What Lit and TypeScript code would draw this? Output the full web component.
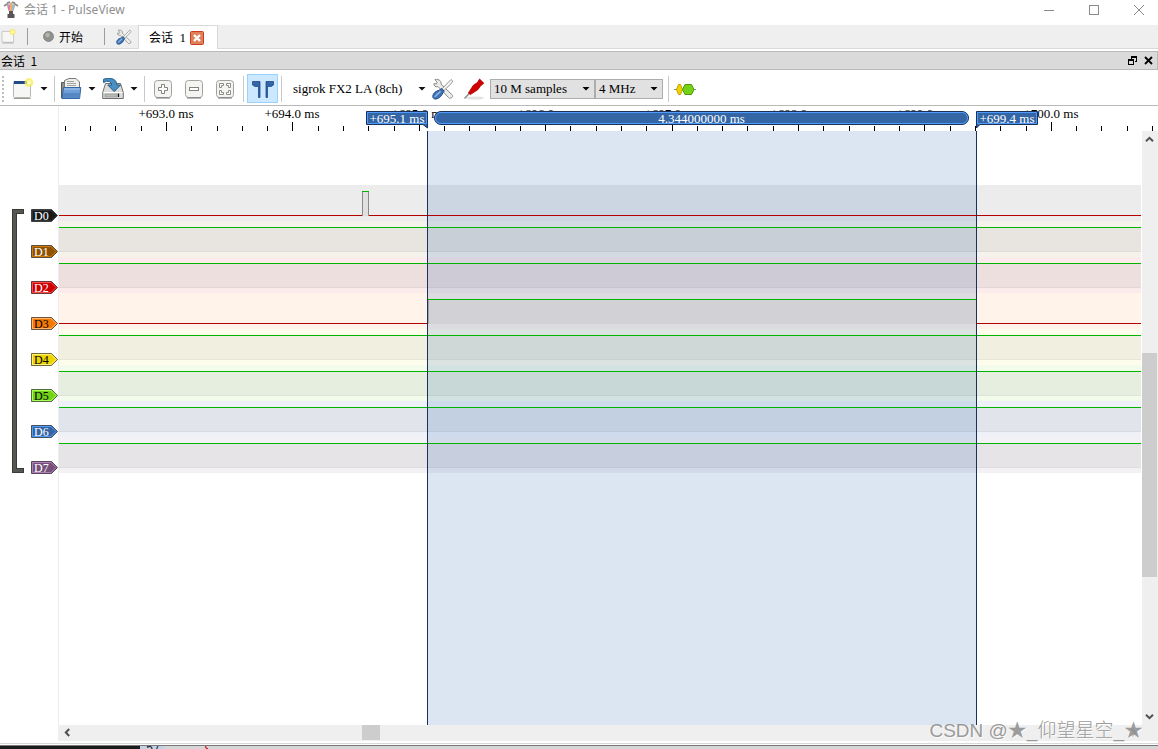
import { LitElement, html, svg, css } from "lit";
import { customElement } from "lit/decorators.js";

type Channel = { name: string; color: string; light: string; ink: string; band: string; high: "all" | "pulse" | "range" };

const CHANNELS: Channel[] = [
  { name: "D0", color: "#16191a", light: "#2c3436", ink: "#fff", band: "#ececec", high: "pulse" },
  { name: "D1", color: "#8f5202", light: "#d17a08", ink: "#fff", band: "#f5f1eb", high: "all" },
  { name: "D2", color: "#cc0000", light: "#ff4a4a", ink: "#fff", band: "#fbebeb", high: "all" },
  { name: "D3", color: "#f57900", light: "#ffb469", ink: "#000", band: "#fff3ea", high: "range" },
  { name: "D4", color: "#edd400", light: "#fff27a", ink: "#000", band: "#fefceb", high: "all" },
  { name: "D5", color: "#73d216", light: "#a9ff54", ink: "#000", band: "#f3fbeb", high: "all" },
  { name: "D6", color: "#3465a4", light: "#4f9bff", ink: "#fff", band: "#eef2f8", high: "all" },
  { name: "D7", color: "#75507b", light: "#b57cbf", ink: "#fff", band: "#f3f1f4", high: "all" },
];

// Time axis: pixels per millisecond, and the position of the first labelled tick.
const PX_PER_MS = 126.4;
const FIRST_MS = 693;
const FIRST_X = 107;
const timeX = (ms: number) => Math.round(FIRST_X + (ms - FIRST_MS) * PX_PER_MS);

const CURSOR_A = timeX(695.064);
const CURSOR_B = timeX(699.408);

const TRACE_TOP = 54;
const TRACE_PITCH = 36;
const HIGH = 6;
const LOW = 30;

const toolsIcon = (size: number) => html`<svg width=${size} height=${size} viewBox="0 0 22 22" aria-hidden="true">
  <path d="M3 1.5 L5.2 4.5 L4.5 6 L2 5.5 C1.5 7.5 3.5 9.5 6 8.6 L16.5 19.5 C17.6 21 20.6 20 20.6 18 C20.6 17 19.8 16.4 19 15.8 L9 6.2 C9.6 3.5 7.5 .8 3 1.5Z" fill="#eceeec" stroke="#888a85"/>
  <path d="M19 1.5 L20.8 3.2 L18.8 6 L12 12.5 L10.2 10.8 L16.5 4Z" fill="#f6f6f6" stroke="#888a85" stroke-width=".9"/>
  <path d="M9.2 10.4 L12.2 13.2 L10.7 15 C10 18 6 21.4 3 21 C.4 20.6 .4 17.6 1.6 15.8 C3.2 13.4 5.6 12.6 7.4 12.2Z" fill="#3e73b5" stroke="#204a87"/>
  <path d="M3 18.5 L8 13.8" stroke="#8fb4e0" stroke-width="1.6" stroke-linecap="round"/>
</svg>`;

const newIcon = (size: number, bar: boolean) => html`<svg width=${size} height=${size} viewBox="0 0 22 22" aria-hidden="true">
  <rect x="1.5" y="3.5" width="17" height="16" rx="1" fill="#f6f6f5" stroke="#b4b6b2"/>
  ${bar ? svg`<rect x="2" y="3" width="13" height="3" fill="#204a87"/>` : null}
  <path d="M2 20.5H18.5" stroke="#999b97"/>
  <circle cx="17" cy="4.5" r="4.4" fill="#f7ee57" opacity=".8"/>
  <circle cx="17" cy="4.5" r="2" fill="#fffcc4"/>
</svg>`;

const openIcon = html`<svg width="22" height="22" viewBox="0 0 22 22" aria-hidden="true">
  <path d="M1.5 20V4.5H6V20Z" fill="#8d8f8b" stroke="#555753"/>
  <path d="M4.5 12V2.5L9 .5H16L19.5 4V12Z" fill="#eeeeec" stroke="#777975"/>
  <path d="M7 3.5H14M7 5.5H16M7 7.5H16" stroke="#a2a4a0"/>
  <path d="M3.5 9.5H20.8L19.6 20.5H2Z" fill="#6f9fd8" stroke="#3465a4"/>
  <path d="M4.2 11H19.6" stroke="#a9c8ee"/>
  <path d="M3.5 15H20L19.3 19.8H2.8Z" fill="#5587c5"/>
</svg>`;

const saveIcon = html`<svg width="22" height="22" viewBox="0 0 22 22" aria-hidden="true">
  <path d="M3.5 5.5H18.5L21.3 14.5V20.5H.7V14.5Z" fill="#dcdddb" stroke="#6d6f6b"/>
  <path d="M1.5 14.5H20.5" stroke="#fff"/>
  <rect x="3" y="16" width="12" height="3" fill="#b9bbb7" stroke="#888a85" stroke-width=".6"/>
  <path d="M16.5 15.5V19" stroke="#111" stroke-width="1.3"/>
  <path d="M1.6 1.2C6-.4 14.5-.6 15 7H18.6L12.2 13.6L5.8 7H9.6C9.4 4 6 1.6 1.6 4.6Z" fill="#4a8ec2" stroke="#1f5d8c"/>
</svg>`;

const frameIcon = (kind: "in" | "out" | "fit") => html`<svg width="22" height="22" viewBox="0 0 22 22" aria-hidden="true">
  <rect x="2.5" y="2.5" width="17" height="17" rx="3" fill="#f4f4f3" stroke="#a0a29e"/>
  <path d="M4 20H18" stroke="#777975"/>
  ${kind === "in" ? svg`<path d="M9.5 6.5H12.5V9.5H15.5V12.5H12.5V15.5H9.5V12.5H6.5V9.5H9.5Z" fill="#fff" stroke="#80827e"/>` : null}
  ${kind === "out" ? svg`<rect x="6.5" y="9.5" width="9" height="3" fill="#fff" stroke="#80827e"/>` : null}
  ${kind === "fit"
    ? svg`<path d="M5.5 5.5H9.5V7.5H7.5V9.5H5.5ZM12.5 5.5H16.5V9.5H14.5V7.5H12.5ZM5.5 12.5H7.5V14.5H9.5V16.5H5.5ZM14.5 12.5H16.5V16.5H12.5V14.5H14.5Z" fill="#fff" stroke="#80827e" stroke-width=".9"/>`
    : null}
</svg>`;

const cursorsIcon = html`<svg width="22" height="22" viewBox="0 0 22 22" aria-hidden="true">
  <path d="M.5 3.5H8V19.5H6.5V8.5H3L.5 7Z" fill="#3465a4" stroke="#204a87" stroke-width=".8"/>
  <path d="M21.5 3.5H14V19.5H15.5V8.5H19L21.5 7Z" fill="#3465a4" stroke="#204a87" stroke-width=".8"/>
</svg>`;

const probeIcon = html`<svg width="22" height="22" viewBox="0 0 22 22" aria-hidden="true">
  <ellipse cx="12" cy="20" rx="9" ry="1.6" fill="#e2e2e2"/>
  <path d="M1.5 20.5L8.5 13" stroke="#888a85" stroke-width="1.4"/>
  <path d="M5.4 15L10.4 7.2L14.4 4.6L16.6 1L20.8 5.2L17.4 8L15 11.6L7.4 16.6Z" fill="#d40000" stroke="#9a0000" stroke-width=".8"/>
</svg>`;

const decoderIcon = html`<svg width="22" height="22" viewBox="0 0 22 22" aria-hidden="true">
  <path d="M0 11.5H22" stroke="#888a85"/>
  <path d="M2.5 11.5L4.5 6.5H6.5L8.5 11.5L6.5 16.5H4.5Z" fill="#edd400" stroke="#c4a000"/>
  <path d="M8.5 11.5L11 6.5H17.5L20 11.5L17.5 16.5H11Z" fill="#73d216" stroke="#4e9a06"/>
</svg>`;

const chevron = (rotate: number) => html`<svg width="9" height="9" viewBox="0 0 9 9" aria-hidden="true">
  <path d="M1 6.2L4.5 2.8L8 6.2" fill="none" stroke="#505050" stroke-width="2" transform="rotate(${rotate} 4.5 4.5)"/>
</svg>`;

@customElement("pv-menu-arrow")
class MenuArrow extends LitElement {
  static styles = css`
    :host { display: block; }
    .arrow { display: flex; align-items: center; justify-content: center; width: 10px; height: 22px; padding: 0; border: 0; background: none; }
    .tri { width: 8px; height: 4px; background: #111; clip-path: polygon(0 0, 100% 0, 50% 100%); }
  `;
  render() {
    return html`<button class="arrow" aria-label="Menu"><span class="tri"></span></button>`;
  }
}

@customElement("app-root")
export class AppRoot extends LitElement {
  static styles = css`
    :host {
      display: flex;
      flex-direction: column;
      position: relative;
      height: 100vh;
      overflow: hidden;
      box-sizing: border-box;
      background: #fff;
      color: #000;
      font: 13px/16px "Liberation Serif", "Noto Sans CJK SC", serif;
    }
    * { box-sizing: border-box; }
    button { padding: 0; border: 0; background: none; color: inherit; font: inherit; }
    svg { display: block; flex: none; }
    .cjk { font: 12px/16px "Noto Sans CJK SC", sans-serif; }

    .titlebar { display: flex; align-items: center; flex: none; height: 25px; padding: 0 9px 6px 3px; color: #8f8f8f; }
    .title { flex: 1; margin: 0 0 0 5px; font: 12px/18px "Noto Sans", "Noto Sans CJK SC", sans-serif; }
    .window-buttons { display: flex; gap: 24px; }
    .window-button { display: grid; place-items: center; width: 21px; height: 18px; }

    .session-bar { display: flex; align-items: center; flex: none; height: 24px; padding-left: 1px; background: #efefef; border-bottom: 1px solid #d9d9d9; }
    .bar-line { flex: none; width: 1px; height: 17px; background: #9c9c9c; }
    .run { display: flex; align-items: center; gap: 5px; margin: 0 21px 0 15px; }
    .settings { margin: 0 6px 0 11px; }
    .tab { display: flex; align-items: center; align-self: stretch; gap: 4px; width: 80px; height: 24px; padding-left: 10px; background: #fff; border: 1px solid #d9d9d9; border-bottom: 0; }
    .session-icon { margin-right: 11px; }

    .dock-title { display: flex; align-items: center; justify-content: space-between; flex: none; height: 19px; margin-top: 2px; padding: 0 4px 0 1px; background: #dadada; border: 1px solid #b9b9b9; border-left: 0; }
    .dock-name { margin: 0; font-weight: normal; }
    .dock-buttons { display: flex; gap: 7px; }

    .toolbar { display: flex; align-items: center; flex: none; gap: 5px; height: 36px; padding: 2px 0 0 2px; border-bottom: 1px solid #b9b9b9; }
    .handle { width: 2px; height: 26px; margin-right: 3px; background: repeating-linear-gradient(#bdbdbd 0 2px, transparent 2px 4px); }
    .tool { display: block; }
    .tool-line { flex: none; width: 1px; height: 26px; background: #c9c9c9; }
    .zoom-tools { display: flex; gap: 9px; margin: 0 2px; }
    .toggled { display: grid; place-items: center; width: 31px; height: 29px; margin: 0 -2px; background: #cce8ff; border: 1px solid #99d1ff; }
    .device { min-width: 119px; margin-left: 6px; text-align: left; white-space: nowrap; }
    .probe { margin-left: 4px; }
    .combos { display: flex; }
    .combo { position: relative; }
    .combo::after { content: ""; position: absolute; right: 5px; top: 8px; width: 8px; height: 4px; background: #000; clip-path: polygon(0 0, 100% 0, 50% 100%); pointer-events: none; }
    .select { display: block; height: 20px; padding: 0 0 0 3px; appearance: none; border: 1px solid #adadad; border-radius: 0; background: #e1e1e1; color: #000; font: inherit; }
    .samples { width: 105px; }
    .rate { width: 68px; }

    .view { display: grid; grid-template: 25px minmax(0, 1fr) 16px / 58px minmax(0, 1fr) 16px; flex: 1; min-height: 0; }
    .gutter { grid-area: 2 / 1; width: 100%; height: 100%; }
    .ruler { grid-area: 1 / 2 / 2 / 4; width: 100%; height: 25px; border-left: 1px solid #ededed; }
    .traces { grid-area: 2 / 2; width: 100%; height: 100%; border-left: 1px solid #ededed; border-right: 1px solid #fff; }
    .ruler, .traces, .gutter { overflow: hidden; }
    .mid { text-anchor: middle; }
    .tag-text { font-size: 12px; }
    .white { fill: #fff; }
    .vscroll { display: flex; flex-direction: column; grid-area: 2 / 3; padding-right: 1px; background: #efefef; }
    .hscroll { display: flex; grid-area: 3 / 2; padding-bottom: 1px; background: #efefef; }
    .corner { grid-area: 3 / 3; background: #efefef; }
    .scroll-button { display: grid; place-items: center; flex: none; width: 15px; height: 17px; }
    .hscroll .scroll-button { width: 18px; height: 15px; }
    .track { display: flex; flex: 1; min-height: 0; }
    .vscroll .track { flex-direction: column; }
    .thumb { background: #cdcdcd; }

    .frame-edge { flex: none; height: 4px; border-bottom: 1px solid #fff; background: linear-gradient(#fff 2px, #d8d8d8 2px); }
    .behind { display: flex; flex: none; height: 4px; overflow: hidden; border-top: 1px solid #777; background: #d6d6d6; font: 12px/6px "Liberation Mono", monospace; }
    .behind-dark { width: 140px; background: #1c1c1c; }
    .behind-line { width: 24px; padding-left: 6px; background: #c4d3e3; color: #223; }
    .behind-mark { margin-left: 38px; color: #d00000; }

    .watermark { position: absolute; right: 15px; bottom: 4px; color: rgba(130, 130, 130, 0.8); font: 300 19px/28px "Liberation Sans", "Noto Sans CJK SC", sans-serif; text-shadow: 1px 1px 0 rgba(255, 255, 255, 0.7); white-space: nowrap; pointer-events: none; }
  `;

  private renderTitlebar() {
    return html`<header class="titlebar">
      <svg width="16" height="18" viewBox="0 0 16 18" aria-hidden="true">
        <path d="M1 5L4 3L6 5M15 5L12 3L10 5M4 2L7 1M12 2L9 1" stroke="#8a8a8a" stroke-width="1.6" fill="none"/>
        <path d="M4 4L7 2H10L12 4L10 10H6Z" fill="#d8c6c0" stroke="#999" stroke-width=".6"/>
        <path d="M6 4V9" stroke="#e85fa8" stroke-width="1.4"/><path d="M8 3V10" stroke="#f0a83c" stroke-width="1.4"/><path d="M10 4V9" stroke="#7ab8d8" stroke-width="1.4"/>
        <path d="M6 10H10V13H11.5V17H4.5V13H6Z" fill="#5b5557"/>
      </svg>
      <h1 class="title">会话 1 - PulseView</h1>
      <div class="window-buttons">
        <button class="window-button" aria-label="Minimize"><svg width="10" height="10" viewBox="0 0 10 10"><path d="M0 5.5H10" stroke="#8a8a8a"/></svg></button>
        <button class="window-button" aria-label="Maximize"><svg width="10" height="10" viewBox="0 0 10 10"><rect x=".5" y=".5" width="9" height="9" fill="none" stroke="#8a8a8a"/></svg></button>
        <button class="window-button" aria-label="Close"><svg width="10" height="10" viewBox="0 0 10 10"><path d="M0 0L10 10M10 0L0 10" stroke="#8a8a8a"/></svg></button>
      </div>
    </header>`;
  }

  private renderSessionBar() {
    return html`<nav class="session-bar">
      <button class="session-icon" aria-label="New session">${newIcon(15, false)}</button>
      <span class="bar-line"></span>
      <button class="run cjk">
        <svg width="11" height="11" viewBox="0 0 11 11" aria-hidden="true"><circle cx="5.5" cy="5.5" r="5" fill="#8f918d" stroke="#7a7c78" stroke-width=".8"/><circle cx="4.5" cy="4" r="2.2" fill="#b4b6b2"/></svg>
        开始
      </button>
      <span class="bar-line"></span>
      <button class="settings" aria-label="Settings">${toolsIcon(16)}</button>
      <div class="tab"><span><span class="cjk">会话</span>&nbsp; 1</span>
        <button aria-label="Close session"><svg width="14" height="14" viewBox="0 0 14 14"><rect x=".5" y=".5" width="13" height="13" rx="1" fill="#e08058" stroke="#cf3a22"/><path d="M4 4L10 10M10 4L4 10" stroke="#fff" stroke-width="2.4"/></svg></button>
      </div>
    </nav>`;
  }

  private renderToolbar() {
    return html`<div class="toolbar" role="toolbar">
      <span class="handle"></span>
      <button class="tool" aria-label="New view">${newIcon(22, true)}</button>
      <pv-menu-arrow></pv-menu-arrow>
      <span class="tool-line"></span>
      <button class="tool" aria-label="Open">${openIcon}</button>
      <pv-menu-arrow></pv-menu-arrow>
      <button class="tool" aria-label="Save">${saveIcon}</button>
      <pv-menu-arrow></pv-menu-arrow>
      <span class="tool-line"></span>
      <div class="zoom-tools">
        <button class="tool" aria-label="Zoom in">${frameIcon("in")}</button>
        <button class="tool" aria-label="Zoom out">${frameIcon("out")}</button>
        <button class="tool" aria-label="Zoom to fit">${frameIcon("fit")}</button>
      </div>
      <span class="tool-line"></span>
      <button class="toggled" aria-label="Show cursors" aria-pressed="true">${cursorsIcon}</button>
      <span class="tool-line"></span>
      <button class="device">sigrok FX2 LA (8ch)</button>
      <pv-menu-arrow></pv-menu-arrow>
      <button class="tool" aria-label="Configure device">${toolsIcon(22)}</button>
      <button class="tool probe" aria-label="Channels">${probeIcon}</button>
      <div class="combos">
        <div class="combo"><select class="select samples" aria-label="Sample count"><option>10 M samples</option></select></div>
        <div class="combo"><select class="select rate" aria-label="Sample rate"><option>4 MHz</option></select></div>
      </div>
      <span class="tool-line"></span>
      <button class="tool" aria-label="Add decoder">${decoderIcon}</button>
    </div>`;
  }

  private renderRuler() {
    const majors = Array.from({ length: 8 }, (_, i) => FIRST_MS + i);
    const ticks = Array.from({ length: 44 }, (_, i) => i - 4);
    const a = CURSOR_A;
    const b = CURSOR_B;
    return html`<svg class="ruler" role="img" aria-label="Time ruler">
      ${ticks.map((i) => {
        const x = timeX(FIRST_MS + i / 5);
        return svg`<rect x=${x} y=${i % 5 === 0 ? 16 : 20} width="1" height="9" fill="#000"/>`;
      })}
      ${majors.map((ms) => svg`<text class="mid" x=${timeX(ms)} y="12">+${ms}.0 ms</text>`)}
      <path d="M${a - 60.5} 5.5H${a + 0.5}V22L${a - 4} 18.5H${a - 60.5}Z" fill="#3465a4" stroke="#19325a"/>
      <path d="M${a - 59.5} 17.5V6.5H${a - 0.5}V17.5Z" fill="none" stroke="#4f9bff"/>
      <text class="mid white" x=${a - 30} y="17">+695.1 ms</text>
      <rect x=${a + 7.5} y="5.5" width=${b - a - 15} height="13" rx="6.5" fill="#3465a4" stroke="#19325a"/>
      <rect x=${a + 8.5} y="6.5" width=${b - a - 17} height="11" rx="5.5" fill="none" stroke="#4f9bff"/>
      <text class="mid white" x=${(a + b) / 2} y="17">4.344000000 ms</text>
      <path d="M${b + 0.5} 22V5.5H${b + 61.5}V18.5H${b + 4}Z" fill="#3465a4" stroke="#19325a"/>
      <path d="M${b + 1.5} 17.5V6.5H${b + 60.5}V17.5Z" fill="none" stroke="#4f9bff"/>
      <text class="mid white" x=${b + 31} y="17">+699.4 ms</text>
    </svg>`;
  }

  private renderTrace(c: Channel, i: number) {
    const top = TRACE_TOP + i * TRACE_PITCH;
    const high = top + HIGH;
    const low = top + LOW;
    const depth = LOW - HIGH;
    const band = svg`<rect x="0" y=${top} width="100%" height=${TRACE_PITCH} fill=${c.band}/>`;
    if (c.high === "all") {
      return svg`${band}
        <rect x="0" y=${high} width="100%" height=${depth + 1} fill="#000" opacity=".05"/>
        <rect x="0" y=${low} width="100%" height="1" fill="#000" opacity=".04"/>
        <rect x="0" y=${high} width="100%" height="1" fill="#00b400"/>`;
    }
    const from = c.high === "pulse" ? timeX(694.55) : CURSOR_A + 1;
    const to = c.high === "pulse" ? from + 7 : CURSOR_B + 1;
    const edge = c.high === "pulse" ? "#8a8a8a" : "#b4b0ae";
    return svg`${band}
      <rect x="0" y=${low} width=${from} height="1" fill="#b40000"/>
      <rect x=${to} y=${low} width="100%" height="1" fill="#b40000"/>
      <rect x=${from} y=${high} width=${to - from} height=${depth + 1} fill="#000" opacity=".05"/>
      <rect x=${from} y=${high} width="1" height=${depth + 1} fill=${edge}/>
      <rect x=${to - 1} y=${high} width="1" height=${depth + 1} fill=${edge}/>
      <rect x=${from} y=${high} width=${to - from} height="1" fill="#00b400"/>`;
  }

  private renderTag(c: Channel, i: number) {
    const y = TRACE_TOP + LOW + i * TRACE_PITCH;
    return svg`<g transform="translate(0 ${y})">
      <path d="M31.5 -5.5H51.5L57.5 .5L51.5 6.5H31.5Z" fill=${c.color} stroke="#000" stroke-opacity=".55"/>
      <path d="M32.5 -4.5H51L56 .5L51 5.5H32.5Z" fill=${c.color} stroke=${c.light}/>
      <text class="tag-text" x="34" y="5" fill=${c.ink}>${c.name}</text>
    </g>`;
  }

  private renderView() {
    const end = TRACE_TOP + LOW + 7 * TRACE_PITCH;
    return html`<main class="view">
      <svg class="gutter" role="img" aria-label="Channels">
        <path d="M24 80.5H14.5V${end + 3.5}H24" fill="none" stroke="#3a3a38" stroke-width="5"/>
        <path d="M23 80.5H14.5V${end + 3.5}H23" fill="none" stroke="#555753" stroke-width="3"/>
        ${CHANNELS.map((c, i) => this.renderTag(c, i))}
      </svg>
      ${this.renderRuler()}
      <svg class="traces" role="img" aria-label="Waveforms">
        ${CHANNELS.map((c, i) => this.renderTrace(c, i))}
        <rect x=${CURSOR_A} y="0" width=${CURSOR_B - CURSOR_A} height="100%" fill="#316bb2" opacity=".17"/>
        ${CHANNELS.map((c, i) => {
          const y = TRACE_TOP + i * TRACE_PITCH + (c.high === "pulse" ? LOW : HIGH);
          return svg`<rect x=${CURSOR_A} y=${y} width=${CURSOR_B - CURSOR_A} height="1" fill=${c.high === "pulse" ? "#b40000" : "#00b400"}/>`;
        })}
        <rect x=${CURSOR_A} y="0" width="1" height="100%" fill="#19325a"/>
        <rect x=${CURSOR_B} y="0" width="1" height="100%" fill="#19325a"/>
      </svg>
      <div class="vscroll">
        <button class="scroll-button" aria-label="Scroll up">${chevron(0)}</button>
        <div class="track"><span style="flex:205"></span><span class="thumb" style="flex:224"></span><span style="flex:131"></span></div>
        <button class="scroll-button" aria-label="Scroll down">${chevron(180)}</button>
      </div>
      <div class="hscroll">
        <button class="scroll-button" aria-label="Scroll left">${chevron(270)}</button>
        <div class="track"><span style="flex:286"></span><span class="thumb" style="flex:18"></span><span style="flex:744"></span></div>
        <button class="scroll-button" aria-label="Scroll right">${chevron(90)}</button>
      </div>
      <div class="corner"></div>
    </main>`;
  }

  render() {
    return html`
      ${this.renderTitlebar()}
      ${this.renderSessionBar()}
      <div class="dock-title">
        <h2 class="dock-name cjk">会话&nbsp; 1</h2>
        <div class="dock-buttons">
          <button aria-label="Float"><svg width="9" height="9" viewBox="0 0 9 9"><path d="M3 0H9V6H7V5H8V2H4V3H3Z"/><path d="M0 3H6V9H0ZM1 5V8H5V5Z" fill-rule="evenodd"/></svg></button>
          <button aria-label="Close"><svg width="9" height="9" viewBox="0 0 9 9"><path d="M1 1L8 8M8 1L1 8" stroke="#000" stroke-width="1.8"/></svg></button>
        </div>
      </div>
      ${this.renderToolbar()}
      ${this.renderView()}
      <div class="frame-edge"></div>
      <footer class="behind"><span class="behind-dark"></span><span class="behind-line">57</span><span class="behind-mark">}</span></footer>
      <div class="watermark">CSDN @★_仰望星空_★</div>
    `;
  }
}
